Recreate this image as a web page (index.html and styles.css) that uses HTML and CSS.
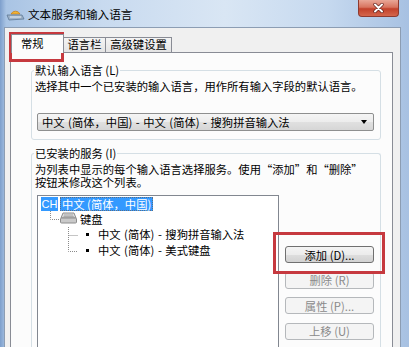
FILE: index.html
```html
<!DOCTYPE html>
<html lang="zh-CN">
<head>
    <meta charset="UTF-8">
    <meta name="viewport" content="width=device-width, initial-scale=1.0">
    <title>文本服务和输入语言</title>
    <link rel="stylesheet" href="styles.css">
</head>
<body>

<div class="window">
    <div class="titlebar">
        <svg class="app-icon" width="19" height="13" viewBox="0 0 19 13">
            <path d="M5 6 A5 5 0 0 1 14 6 Z" fill="#f3b634" stroke="#c9801a" stroke-width="0.8"/>
            <path d="M1 7 L16 7 L18 11 L3 12 Z" fill="#9fb3c8" stroke="#5e7896" stroke-width="0.8"/>
            <path d="M4 9 L15 9" stroke="#e8eef5" stroke-width="1"/>
        </svg>
        <span class="title">文本服务和输入语言</span>
        <div class="close-btn">
            <svg width="13" height="10" viewBox="0 0 13 10">
                <path d="M3 1.5 L10 8.5 M10 1.5 L3 8.5" stroke="#5a1a14" stroke-width="3.2" stroke-linecap="round"/>
                <path d="M3 1.5 L10 8.5 M10 1.5 L3 8.5" stroke="#fff" stroke-width="2" stroke-linecap="round"/>
            </svg>
        </div>
    </div>

    <div class="client">
        <div class="tabs">
            <div class="tab active">常规</div>
            <div class="tab tab-bar">语言栏</div>
            <div class="tab tab-keys">高级键设置</div>
        </div>

        <div class="panel">
            <fieldset class="group">
                <legend>默认输入语言 (L)</legend>
                <p class="desc">选择其中一个已安装的输入语言，用作所有输入字段的默认语言。</p>
                <div class="combo">
                    <span>中文 (简体，中国) - 中文 (简体) - 搜狗拼音输入法</span>
                    <span class="combo-arrow"></span>
                </div>
            </fieldset>

            <fieldset class="group group-services">
                <legend>已安装的服务 (I)</legend>
                <p class="desc">为列表中显示的每个输入语言选择服务。使用“添加”和“删除”</p>
                <p class="desc">按钮来修改这个列表。</p>

                <div class="services">
                    <div class="tree">
                        <div class="tree-row">
                            <span class="lang-code">CH</span>
                            <span class="tree-label selected">中文 (简体，中国)</span>
                        </div>
                        <div class="tree-row level-1">
                            <svg class="branch" width="10" height="16" viewBox="0 0 10 16">
                                <path d="M0.5 0 V8.5 H10" fill="none" stroke="#8a8a8a" stroke-dasharray="1 1"/>
                            </svg>
                            <svg class="kbd-icon" width="17" height="12" viewBox="0 0 17 12">
                                <path d="M3 1 L14 1 L16 6 L1 6 Z" fill="#dcdcdc" stroke="#8c8c8c"/>
                                <path d="M4 3 L13 3 M3.5 4.6 L13.8 4.6" stroke="#9a9a9a" stroke-width="0.8"/>
                                <rect x="0.5" y="6" width="16" height="5" rx="1" fill="#c9c9c9" stroke="#8c8c8c"/>
                            </svg>
                            <span class="tree-label">键盘</span>
                        </div>
                        <div class="tree-row level-2">
                            <svg class="branch" width="10" height="16" viewBox="0 0 10 16">
                                <path d="M0.5 0 V16 M0.5 8.5 H10" fill="none" stroke="#8a8a8a" stroke-dasharray="1 1"/>
                            </svg>
                            <span class="bullet"></span>
                            <span class="tree-label">中文 (简体) - 搜狗拼音输入法</span>
                        </div>
                        <div class="tree-row level-2">
                            <svg class="branch" width="10" height="16" viewBox="0 0 10 16">
                                <path d="M0.5 0 V8.5 H10" fill="none" stroke="#8a8a8a" stroke-dasharray="1 1"/>
                            </svg>
                            <span class="bullet"></span>
                            <span class="tree-label">中文 (简体) - 美式键盘</span>
                        </div>
                    </div>

                    <div class="buttons">
                        <button class="btn">添加 (D)...</button>
                        <button class="btn" disabled>删除 (R)</button>
                        <button class="btn" disabled>属性 (P)...</button>
                        <button class="btn" disabled>上移 (U)</button>
                    </div>
                </div>
            </fieldset>
        </div>
    </div>
</div>

<!-- red annotation marks drawn over the dialog -->
<div class="mark mark-tab"></div>
<div class="mark mark-add"></div>

</body>
</html>
```

FILE: styles.css
```css
* {
    margin: 0;
    padding: 0;
    box-sizing: border-box;
}

body {
    width: 409px;
    height: 347px;
    overflow: hidden;
    position: relative;
    font-family: "Noto Sans CJK SC", "Noto Sans", sans-serif;
    font-size: 11.3px;
    color: #000;
    background: #b9cfe9;
}

/* Window frame */
.window {
    height: 347px;
    display: flex;
    flex-direction: column;
    overflow: hidden;
    background: linear-gradient(to right, #7d9fcc 0, #a9c4e4 1.5%, #c8daef 25%, #d9e6f4 55%, #c6d9ef 80%, #a7c1e2 100%);
}

.titlebar {
    flex-shrink: 0;
    height: 27px;
    display: flex;
    align-items: flex-start;
}

.app-icon {
    margin: 8px 0 0 6px;
}

.title {
    margin: 7px 0 0 3px;
    line-height: 14px;
    font-size: 11.6px;
}

.close-btn {
    margin-left: auto;
    margin-right: 10px;
    width: 41px;
    height: 17px;
    border: 1px solid #8e3a2f;
    border-top: none;
    border-radius: 0 0 4px 4px;
    background: linear-gradient(#e9a797 0, #d8745f 45%, #c2412b 55%, #d4664c 100%);
    display: flex;
    align-items: center;
    justify-content: center;
}

.client {
    flex: 1;
    min-height: 0;
    overflow: hidden;
    margin: 0 8px 0 4px;
    background: #f0f0f0;
    border: 1px solid #8c9db3;
    border-bottom: none;
    padding: 6px 7px 0 5px;
    display: flex;
    flex-direction: column;
}

/* Tabs */
.tabs {
    flex-shrink: 0;
    display: flex;
    align-items: flex-end;
    height: 19px;
    margin-bottom: -1px;
    padding-left: 1px;
    position: relative;
    z-index: 1;
}

.tab {
    height: 15px;
    margin-bottom: 1px;
    border: 1px solid #898c95;
    border-left: none;
    border-bottom: none;
    background: linear-gradient(#f4f4f4, #e4e4e4);
    line-height: 13px;
    text-align: center;
}

.tab.active {
    width: 53px;
    height: 19px;
    margin-bottom: 0;
    border-left: 1px solid #898c95;
    background: #fcfcfc;
    text-align: left;
    padding-left: 9px;
    line-height: 17px;
}

.tab-bar {
    width: 42px;
}

.tab-keys {
    width: 66px;
}

.panel {
    flex: 1;
    min-height: 0;
    background: #fcfcfc;
    border: 1px solid #898c95;
    border-bottom: none;
    padding: 11px 11px 0 20px;
}

/* Group boxes */
.group {
    border: 1px solid #d5dfe5;
    border-radius: 3px;
    padding: 3px 6px 8px 3px;
}

.group legend {
    padding: 0 1px;
    margin-left: -1px;
    line-height: 13px;
}

.desc {
    height: 13px;
    line-height: 13px;
    white-space: nowrap;
}

.combo {
    margin: 20px 0 0 2px;
    width: 337px;
    height: 18px;
    border: 1px solid #8e8f8f;
    border-radius: 2px;
    background: linear-gradient(#f5f5f5 0, #ececec 50%, #e0e0e0 51%, #d6d6d6 100%);
    display: flex;
    align-items: center;
    justify-content: space-between;
    padding: 0 6px 0 4px;
    line-height: 16px;
    word-spacing: 1px;
}

.combo-arrow {
    width: 0;
    height: 0;
    border-left: 3.5px solid transparent;
    border-right: 3.5px solid transparent;
    border-top: 4px solid #000;
}

.group-services {
    margin-top: 7px;
    padding-bottom: 0;
    border-bottom: none;
    border-radius: 3px 3px 0 0;
}

.services {
    display: flex;
    margin-top: 6px;
}

/* Tree view */
.tree {
    width: 242px;
    height: 170px;
    margin-left: 2px;
    border: 1px solid #828790;
    border-bottom: none;
    background: #fff;
}

.tree-row {
    height: 15.6px;
    display: flex;
    align-items: center;
    padding-left: 3px;
    white-space: nowrap;
}

.tree-row.level-1 {
    padding-left: 12px;
}

.tree-row.level-2 {
    padding-left: 30px;
}

.lang-code {
    width: 17px;
    height: 14px;
    background: #3399ff;
    color: #fff;
    font-family: "Liberation Sans", sans-serif;
    font-size: 11px;
    line-height: 14px;
    text-align: center;
}

.tree-label {
    line-height: 13px;
}

.tree-label.selected {
    margin-left: 2px;
    padding: 0 1px;
    background: #3399ff;
    color: #fff;
    border: 1px dotted #5a6e86;
    line-height: 12px;
}

.kbd-icon {
    margin-top: -2px;
}

.level-1 .tree-label {
    margin-left: 3px;
}

.bullet {
    width: 3px;
    height: 3px;
    background: #000;
    margin-left: 8px;
}

.level-2 .tree-label {
    margin-left: 9px;
    word-spacing: 1px;
}

/* Buttons */
.buttons {
    display: flex;
    flex-direction: column;
    gap: 8.6px;
    margin-left: 6px;
    padding-top: 51px;
}

.btn {
    width: 89px;
    height: 17px;
    border: 1px solid #707070;
    border-radius: 3px;
    background: linear-gradient(#f4f4f4 0, #ececec 50%, #dedede 51%, #d2d2d2 100%);
    font: inherit;
    line-height: 14px;
    color: #000;
    text-align: center;
}

.btn:disabled {
    border-color: #b5b8bb;
    background: #f4f4f4;
    color: #8a8a8a;
}

/* Red annotation rectangles */
.mark {
    position: absolute;
    border: 3px solid #c6393f;
}

.mark-tab {
    left: 9px;
    top: 32px;
    width: 55px;
    height: 30px;
}

.mark-add {
    left: 273px;
    top: 232px;
    width: 112px;
    height: 42px;
}
```
